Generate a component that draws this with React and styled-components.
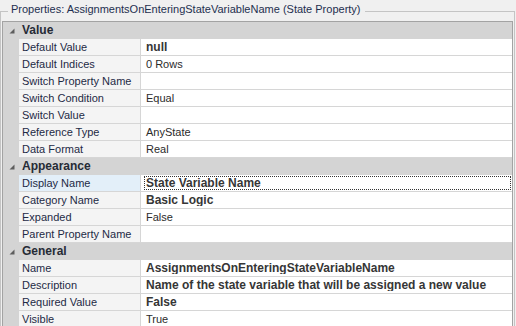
import React from 'react';
import styled, { createGlobalStyle } from 'styled-components';

const Global = createGlobalStyle`
  html, body { margin: 0; padding: 0; background: #f0f0f0; overflow: hidden; }
  body { font-family: "Liberation Sans", Arial, sans-serif; }
  * { box-sizing: border-box; }
`;

const Frame = styled.div`
  width: 515px;
  height: 326px;
  display: flex;
  flex-direction: column;
  overflow: hidden;
`;

const TitleRow = styled.div`
  display: flex;
  height: 21px;
  flex-shrink: 0;
  &::before {
    content: '';
    width: 7px;
    margin-top: 11px;
    border-top: 1px solid #c4c4c4;
    border-left: 1px solid #c4c4c4;
  }
  &::after {
    content: '';
    flex: 1;
    margin-top: 11px;
    border-top: 1px solid #c4c4c4;
    border-right: 1px solid #c4c4c4;
  }
`;

const Title = styled.span`
  font-size: 11px;
  line-height: 14px;
  padding: 2px 4px 0 3px;
  color: #1e2f4f;
  white-space: nowrap;
`;

const Body = styled.div`
  flex: 1;
  display: flex;
  flex-direction: column;
  border-left: 1px solid #c4c4c4;
  border-right: 1px solid #c4c4c4;
  padding: 0 1px;
  min-height: 0;
`;

const Grid = styled.div`
  flex: 1;
  border: 1px solid #a3a3a3;
  border-bottom: none;
  background: #d4d4d4;
  display: flex;
  flex-direction: column;
`;

const Row = styled.div`
  display: grid;
  grid-template-columns: 16px 122px 1fr;
  grid-template-rows: 17px;
  height: 17px;
  flex-shrink: 0;
`;

const Margin = styled.div`
  background: #d4d4d4;
  display: flex;
  align-items: center;
  justify-content: center;
  padding-left: 1px;
`;

const CategoryName = styled.div`
  grid-column: 2 / 4;
  background: #d4d4d4;
  font-size: 12px;
  font-weight: bold;
  line-height: 17px;
  padding-left: 3px;
  color: #262b36;
`;

const Label = styled.div`
  background: ${(p) => (p.$selected ? '#e3eff9' : '#f4f4f4')};
  border-bottom: 1px solid #d6d6d6;
  border-right: 1px solid #d6d6d6;
  font-size: 11px;
  line-height: 16px;
  padding-left: 3px;
  color: #1e2a45;
  white-space: nowrap;
  overflow: hidden;
`;

const Value = styled.div`
  background: #ffffff;
  border-bottom: 1px solid #d6d6d6;
  padding: 0 1px 0 3px;
  display: flex;
  overflow: hidden;
`;

const ValueText = styled.div`
  flex: 1;
  font-size: ${(p) => (p.$bold ? '12px' : '11px')};
  font-weight: ${(p) => (p.$bold ? 'bold' : 'normal')};
  line-height: 12px;
  color: ${(p) => (p.$bold ? '#363636' : '#2b2b2b')};
  padding-left: 1px;
  margin: 1px 0;
  border: 1px ${(p) => (p.$focused ? 'dotted #333' : 'solid transparent')};
  white-space: nowrap;
  overflow: hidden;
`;

const Arrow = () => (
  <svg width="6" height="6" viewBox="0 0 6 6">
    <polygon points="5.5,0.5 5.5,5.5 0.5,5.5" fill="#5e5e5e" />
  </svg>
);

const data = [
  {
    name: 'Value',
    props: [
      ['Default Value', 'null', true],
      ['Default Indices', '0 Rows'],
      ['Switch Property Name', ''],
      ['Switch Condition', 'Equal'],
      ['Switch Value', ''],
      ['Reference Type', 'AnyState'],
      ['Data Format', 'Real'],
    ],
  },
  {
    name: 'Appearance',
    props: [
      ['Display Name', 'State Variable Name', true, true],
      ['Category Name', 'Basic Logic', true],
      ['Expanded', 'False'],
      ['Parent Property Name', ''],
    ],
  },
  {
    name: 'General',
    props: [
      ['Name', 'AssignmentsOnEnteringStateVariableName', true],
      ['Description', 'Name of the state variable that will be assigned a new value', true],
      ['Required Value', 'False', true],
      ['Visible', 'True'],
    ],
  },
];

export default function App() {
  return (
    <>
      <Global />
      <Frame>
        <TitleRow>
          <Title>Properties: AssignmentsOnEnteringStateVariableName (State Property)</Title>
        </TitleRow>
        <Body>
          <Grid>
            {data.map((cat) => (
              <React.Fragment key={cat.name}>
                <Row>
                  <Margin>
                    <Arrow />
                  </Margin>
                  <CategoryName>{cat.name}</CategoryName>
                </Row>
                {cat.props.map(([label, value, bold, sel]) => (
                  <Row key={label}>
                    <Margin />
                    <Label $selected={sel}>{label}</Label>
                    <Value>
                      <ValueText $bold={bold} $focused={sel}>
                        {value}
                      </ValueText>
                    </Value>
                  </Row>
                ))}
              </React.Fragment>
            ))}
          </Grid>
        </Body>
      </Frame>
    </>
  );
}
